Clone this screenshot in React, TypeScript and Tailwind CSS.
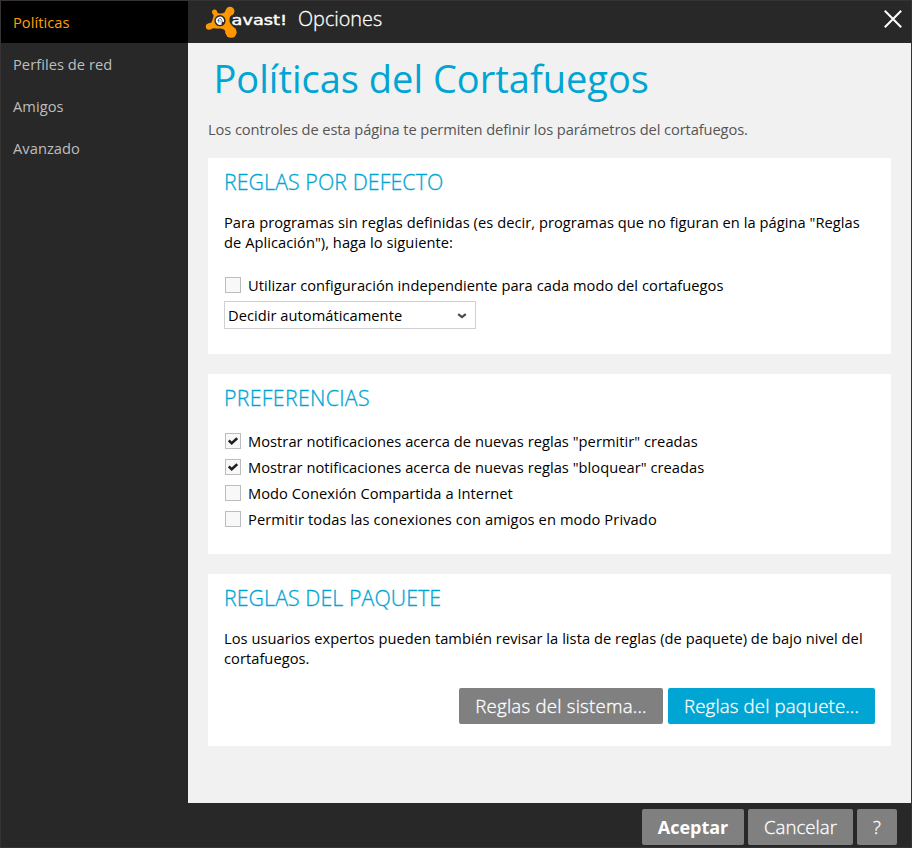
import { ReactNode } from "react";

const navItems = ["Políticas", "Perfiles de red", "Amigos", "Avanzado"];

function Logo() {
  return (
    <svg width="84" height="34" viewBox="204 4 84 34" className="block shrink-0" role="img" aria-label="avast!">
      <g fill="#ff9800">
        <circle cx="230" cy="11.2" r="4.4" />
        <circle cx="214.5" cy="12" r="2.5" />
        <circle cx="209" cy="26.6" r="3.2" />
        <circle cx="231" cy="32.2" r="5.6" />
        <path d="M212.6 13.4 L216.4 10.8 Q217.5 14 220.5 13.4 Q225.5 13.5 225.8 10 L233.6 13.8 C230.6 15 229.4 17 229.4 20 C229.4 23.6 232 25.6 235.8 29.4 L226 34 C225.6 29.5 223 28.5 219 28.5 C215.2 28.3 213 27.5 211 29.2 L208 23.5 C212.8 23.2 212 20 213.2 17.5 Q214.3 15 212.6 13.4Z" />
      </g>
      <circle cx="220" cy="20.7" r="5.6" fill="#282828" />
      <circle cx="220" cy="20.7" r="3.2" fill="none" stroke="#fff" strokeWidth="1.8" strokeDasharray="17.5 2.6" transform="rotate(60 220 20.7)" />
      <text x="220.1" y="22.6" textAnchor="middle" fill="#fff" fontFamily="Open Sans, sans-serif" fontWeight="800" fontSize="6">a</text>
      <text x="231.6" y="24.7" fill="#fff" stroke="#fff" strokeWidth="0.4" fontFamily="DejaVu Sans, sans-serif" fontSize="13.5" textLength="55.5" lengthAdjust="spacingAndGlyphs">avast!</text>
    </svg>
  );
}

function Check({ label, checked = false, tracking = "tracking-[0.04px]" }: { label: string; checked?: boolean; tracking?: string }) {
  return (
    <label className="flex h-[26px] items-center pl-px text-[14.67px]">
      <span className="mr-[7px] flex size-4 shrink-0 items-center justify-center border border-[#bcbcbc] bg-[#f8f8f8]">
        {checked && (
          <svg width="10" height="8" viewBox="0 0 10 8" fill="none" stroke="#202020" strokeWidth="2.5">
            <path d="M0.8 3.5 L3.7 6.2 L9.2 1.2" />
          </svg>
        )}
      </span>
      <span className={`whitespace-nowrap ${tracking}`}>{label}</span>
    </label>
  );
}

function Card({ title, className, tracking, children }: { title: string; className: string; tracking: string; children: ReactNode }) {
  return (
    <section className={`w-[683px] shrink-0 bg-white px-4 pt-2 ${className}`}>
      <h2 className={`h-8 text-[21.33px] leading-8 font-light text-[#00a5d3] [-webkit-text-stroke:0.3px] ${tracking}`}>{title}</h2>
      {children}
    </section>
  );
}

export default function App() {
  return (
    <div className="flex h-[848px] w-[912px] overflow-hidden border border-[#373334] bg-[#282828] font-['Open_Sans',sans-serif] text-black">
      <nav className="w-[187px] shrink-0 text-[14.67px] tracking-[0.05px] text-[#bebebe]">
        {navItems.map((item, i) => (
          <div key={item} className={i === 0 ? "flex h-[42px] items-center bg-black pl-3 text-[#ffa000]" : "flex h-[42px] items-center pl-3"}>
            {item}
          </div>
        ))}
      </nav>
      <div className="flex min-w-0 flex-1 flex-col">
        <header className="flex h-[42px] shrink-0 pt-[3px] pr-[9.5px] pl-4 text-white">
          <Logo />
          <span className="ml-[10px] h-8 text-[19.8px] leading-[30px] font-light [-webkit-text-stroke:0.3px]">Opciones</span>
          <svg className="mt-[6px] ml-auto" width="18" height="18" viewBox="0 0 18 18" stroke="#fff" strokeWidth="2">
            <path d="M0.8 0.8 L17.2 17.2 M17.2 0.8 L0.8 17.2" />
          </svg>
        </header>
        <main className="flex h-[760px] shrink-0 flex-col bg-[#f1f1f1] pl-5">
          <h1 className="ml-[5.5px] h-[74px] text-[38px] leading-[71px] whitespace-nowrap text-[#00a5d3]">Políticas del Cortafuegos</h1>
          <p className="h-[41px] pt-[2px] text-[14.67px] leading-5 tracking-[-0.09px] text-[#555]">Los controles de esta página te permiten definir los parámetros del cortafuegos.</p>
          <Card title="REGLAS POR DEFECTO" tracking="tracking-[0.08px]" className="h-[196px]">
            <p className="mt-[14px] mb-5 text-[14.67px] leading-5 tracking-[0.045px] whitespace-nowrap">
              Para programas sin reglas definidas (es decir, programas que no figuran en la página "Reglas<br />
              de Aplicación"), haga lo siguiente:
            </p>
            <Check label="Utilizar configuración independiente para cada modo del cortafuegos" />
            <div className="mt-[3px] flex h-7 w-[252px] items-center justify-between border border-[#d0d0d0] pr-2 pl-[3px] text-[14.67px] tracking-[0.04px]">
              <span>Decidir automáticamente</span>
              <svg width="10" height="6" viewBox="0 0 10 6" className="mt-[2px]" fill="none" stroke="#484848" strokeWidth="2.2">
                <path d="M1.2 1.2 L5 4.2 L8.8 1.2" />
              </svg>
            </div>
          </Card>
          <Card title="PREFERENCIAS" tracking="tracking-[0.3px]" className="mt-5 h-[180px]">
            <div className="mt-[14px]">
              <Check checked label={'Mostrar notificaciones acerca de nuevas reglas "permitir" creadas'} />
              <Check checked label={'Mostrar notificaciones acerca de nuevas reglas "bloquear" creadas'} />
              <Check label="Modo Conexión Compartida a Internet" />
              <Check tracking="tracking-[0.1px]" label="Permitir todas las conexiones con amigos en modo Privado" />
            </div>
          </Card>
          <Card title="REGLAS DEL PAQUETE" tracking="tracking-[0.08px]" className="mt-5 h-[172px]">
            <p className="mt-[14px] mb-5 text-[14.67px] leading-5 tracking-[0.04px] whitespace-nowrap">
              Los usuarios expertos pueden también revisar la lista de reglas (de paquete) de bajo nivel del<br />
              cortafuegos.
            </p>
            <div className="flex justify-end gap-[5px] text-[18.67px] font-light text-white [-webkit-text-stroke:0.3px]">
              <button className="h-9 w-[204px] rounded-[2px] bg-[#808080] tracking-[0.22px] whitespace-nowrap">Reglas del sistema...</button>
              <button className="h-9 w-[207px] rounded-[2px] bg-[#00a5d3] tracking-[0.13px] whitespace-nowrap">Reglas del paquete...</button>
            </div>
          </Card>
        </main>
        <footer className="flex justify-end gap-1 pt-[6px] pr-[14px] text-[18.67px] font-light text-white">
          <button className="h-9 w-[102px] rounded-[2px] bg-[#808080] text-[18px] font-bold">Aceptar</button>
          <button className="h-9 w-[105px] rounded-[2px] bg-[#808080] [-webkit-text-stroke:0.3px]">Cancelar</button>
          <button className="h-9 w-10 rounded-[2px] bg-[#808080] [-webkit-text-stroke:0.3px]">?</button>
        </footer>
      </div>
    </div>
  );
}
